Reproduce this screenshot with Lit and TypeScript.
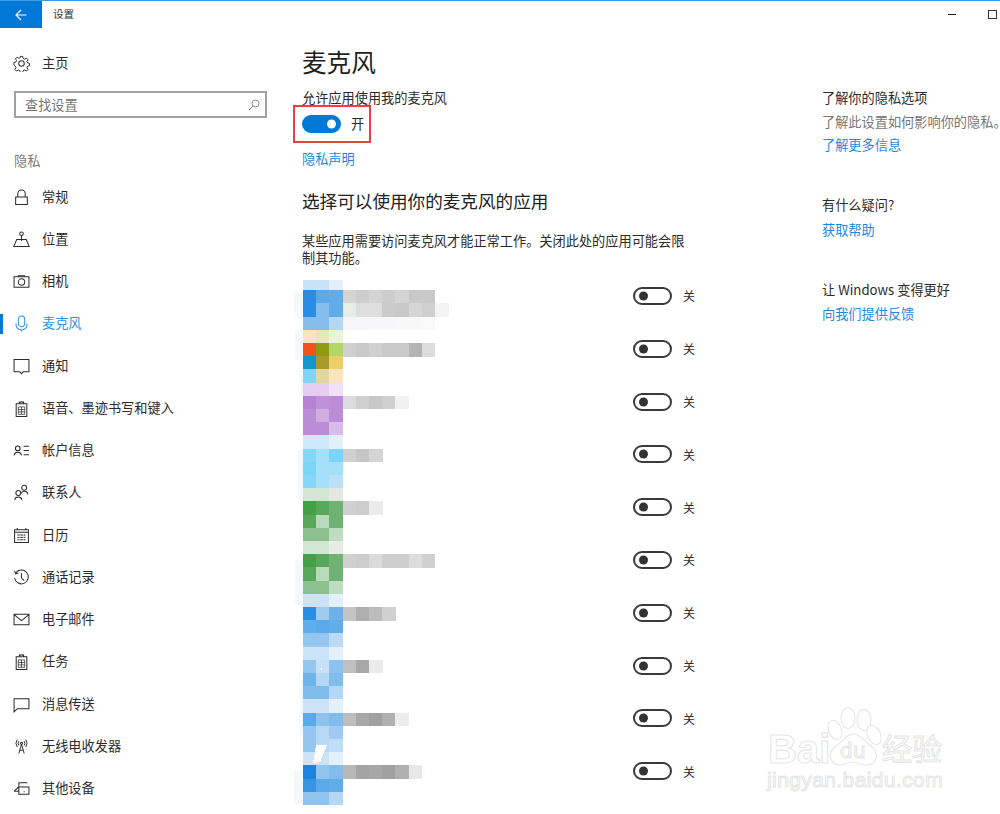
import { LitElement, html, css, svg } from "lit";
import { customElement } from "lit/decorators.js";

const MOSAIC: string[][] = [
  ["c9e2f7","c9e2f7","e3f0fb"],
  ["2a8de4","5aa9e8","60ade9","d4d4d4","cdcdcd","d4d4d4","cdcdcd","d4d4d4","c9c9c9","c9c9c9"],
  ["2a8de4","85bdee","60ade9","e6ece6","dedede","dedede","cbcbcb","c8c8c8","d6d6d6","cfcfcf","f3f3f3"],
  ["85bdee","85bdee","b5d7f4","f6f6f9","f6f6f9","f7f7f9","f7f7f9","f8f8f9","f8f8f9","f9f9fa"],
  ["fde3c4","e8e5c4","eaf2d8"],
  ["f4511e","8f9a10","b2d766","d0d0d0","cacaca","d0d0d0","cacaca","cacaca","b4b4b4","dcdcdc"],
  ["1196d0","a99a30","edcf6a"],
  ["80d4f8","dfd6a0","fde3c0"],
  ["e4cdee","e4cdee","efe2f6"],
  ["b583d2","bf92d8","bc8cd6","dcdcdc","cfcfcf","c8c8c8","cfcfcf","eef3ee"],
  ["bc8cd6","cfaee2","bc8cd6"],
  ["bc8cd6","bc8cd6","d9bde8"],
  ["cdeafd","cdeafd","e2f0fc"],
  ["85d6f8","a4e0fa","7bd5f8","d0d0d0","c6c6c6","d4d4d4"],
  ["7bd5f8","a4e0fa","a4e0fa"],
  ["85d6f8","a4e0fa","bcdff6"],
  ["d3e5d3","d3e5d3","e4e8e4"],
  ["43a047","58a85c","70b274","d0d0d0","cdcdcd","ebebeb"],
  ["58a85c","b8dab9","70b274"],
  ["8cc08e","8cc08e","bedcbf"],
  ["d3e5d3","d3e5d3","e8ece8"],
  ["43a047","58a85c","70b274","d0d0d0","cdcdcd","dadada","cecece","cecece","dcdcdc","d0d0d0"],
  ["58a85c","b8dab9","70b274"],
  ["8cc08e","8cc08e","bedcbf"],
  ["cde2f7","cde2f7","e4f0fb"],
  ["2a8de4","a0cbf0","6fb0e8","c4c4c4","aeaeae","bcbcbc","d0d0d0"],
  ["60ade9","5aa9e8","60ade9"],
  ["95c6f0","95c6f0","bcdaf5"],
  ["cde4f8","cde4f8","e4f0fc"],
  ["95c6f0","c8e0f8","8cc2ee","c0c0c0","a8a8a8","ebebeb"],
  ["6fb5ea","b5d7f4","80bcec"],
  ["80bcec","80bcec","b5d7f4"],
  ["cde4f8","cde4f8","e4f0fc"],
  ["5aa9e8","90c2ee","80bcec","bebebe","a8a8a8","a0a0a0","b0b0b0","ececec"],
  ["95c6f0","b8d9f5","9fcbf2"],
  ["95c6f0","b8d9f5","c0dff6"],
  ["cde4f8","cde4f8","e4f0fc"],
  ["1a84e0","90c4ee","80bcec","b8b8b8","a4a4a4","a8a8a8","a0a0a0","b0b0b0","e4ebe4"],
  ["3a94e4","5aa9e8","60ade9"],
  ["90c4ee","90c4ee","b5d7f4"],
];

const ic = (c: unknown) => html`<svg class="ic" viewBox="0 0 16 16" fill="none" stroke="currentColor" stroke-width=".95">${c}</svg>`;

const ICONS: Record<string, unknown> = {
  lock: svg`<path d="M2.500 7.500h11v7h-11zM4.500 7.500V4.500a3.500 3.500 0 0 1 7 0v3"/>`,
  loc: svg`<circle cx="8" cy="2.600" r="1.700"/><path d="M8 4.300V9.500M.8 14.500h14.400L12.500 8H3.500z"/>`,
  cam: svg`<path d="M1 3.500h14v10H1z"/><circle cx="8" cy="8.500" r="3"/><path d="M5 3.500V2.500h6v1"/>`,
  mic: svg`<rect x="5" y="1" width="6" height="10" rx="3"/><path d="M2.800 8v1a5 5 0 0 0 10.400 0V8M8 14v1.500"/>`,
  note: svg`<path d="M1 1.500h14v11.500H9.500L8 14.800 6.500 13H1z"/>`,
  clip: svg`<path d="M3 3.500h10v12H3zM6 3.500V2h1.200a1 1 0 0 1 1.600 0H10v1.500z"/><path d="M5 6.500h6v7H5zM5 9h6M5 11.200h6M8 6.500v7" stroke-width=".7"/>`,
  acct: svg`<circle cx="4.500" cy="6" r="2.200"/><path d="M1 12.500a3.600 3.600 0 0 1 7 0M10 4h5M10 8h5M10 12h5"/>`,
  people: svg`<circle cx="10.500" cy="3.500" r="2.300"/><path d="M7.500 9a3.400 3.400 0 0 1 6.500.8"/><circle cx="5" cy="8.500" r="2.300"/><path d="M1.500 15a3.600 3.600 0 0 1 7 0"/>`,
  cal: svg`<path d="M1.500 2.500h13v12h-13zM1.500 5h13M4 1v2M12 1v2"/><path d="M4 7.500h8M4 9.800h8M4 12h8M5.500 7v5.500M8 7v5.500M10.500 7v5.500" stroke-width=".8" stroke-dasharray="1.200 1"/>`,
  hist: svg`<path d="M2.300 4.200A6.500 6.500 0 1 1 1.500 8.500M8 4v4.500l2.500 2.500M1.500 1.800l1 2.800 2.600-.8"/>`,
  mail: svg`<path d="M1 3h14v10H1zM1 3.500l7 5.500 7-5.500"/>`,
  chat: svg`<path d="M1 2.500h14v9.500H4l-3 3z"/>`,
  radio: svg`<circle cx="8" cy="5" r="1"/><path d="M8 6 5.500 14.500M8 6l2.500 8.500M6.300 11.500h3.400M5.500 3a3.500 3.500 0 0 0 0 4M10.500 3a3.500 3.500 0 0 1 0 4M4 1.500a6 6 0 0 0 0 7M12 1.500a6 6 0 0 1 0 7" stroke-width=".9"/>`,
  dev: svg`<path d="M5.500 6.500v-4h8M1 10.500h4.500M1 10.500l4.500-4M5.500 6.500h9.500v7H5.500z"/><path d="M10 11h1"/>`,
  gear: svg`<circle cx="8" cy="8" r="2.600"/><path d="M6.800 1h2.400l.4 2 1.500.7 1.800-1.100 1.600 1.700-1.100 1.700.7 1.500 1.900.4v2.300l-1.900.4-.7 1.600 1.100 1.700-1.600 1.600-1.800-1.100-1.500.7-.4 2H6.800l-.4-2-1.500-.7-1.800 1.100-1.600-1.600 1.100-1.700-.7-1.600L.5 9.300V7l1.900-.4.7-1.500-1.100-1.700 1.600-1.700 1.800 1.100 1.500-.7z" transform="translate(.4 .4) scale(.95)"/>`,
};

const NAV: [string, string][] = [
  ["lock", "常规"], ["loc", "位置"], ["cam", "相机"], ["mic", "麦克风"], ["note", "通知"],
  ["clip", "语音、墨迹书写和键入"], ["acct", "帐户信息"], ["people", "联系人"], ["cal", "日历"],
  ["hist", "通话记录"], ["mail", "电子邮件"], ["clip", "任务"], ["chat", "消息传送"],
  ["radio", "无线电收发器"], ["dev", "其他设备"],
];

@customElement("app-root")
export class AppRoot extends LitElement {
  static styles = css`
    :host { display: block; width: 1000px; height: 814px; overflow: hidden; background: #fff; position: relative;
      font-family: "Noto Sans CJK SC", "Liberation Sans", sans-serif; font-size: 13.2px; color: #2b2b2b; }
    .accent { height: 1px; background: #3c9be0; }
    .bar { height: 27px; display: flex; align-items: center; }
    .back { width: 42px; height: 27px; background: #0078d7; display: flex; align-items: center; justify-content: center; color: #fff; }
    .back svg { width: 12px; height: 12px; }
    .app-title { margin: -2px 0 0 11px; font-size: 10.6px; color: #333; }
    .wc { margin-left: auto; margin-top: -1px; display: flex; align-items: center; }
    .min { width: 8px; height: 1px; background: #222; margin-right: 32px; }
    .max { width: 7px; height: 7px; border: 1px solid #333; margin-right: 3px; }
    .page { display: flex; }
    .side { width: 302px; flex: none; }
    .home { display: flex; align-items: center; height: 20px; margin-top: 25px; padding-left: 14px; }
    .home span, .item span { margin-top: -2px; }
    .ic { width: 17px; height: 17px; flex: none; margin: 0 12px 0 -1px; }
    .search { margin: 18px 0 0 14px; width: 253px; height: 27px; box-sizing: border-box; border: 2px solid #a0a0a0;
      display: flex; align-items: center; justify-content: space-between; padding: 0 5px 0 9px; color: #767676; }
    .search svg { width: 12px; height: 12px; color: #8a8a8a; }
    .group { margin: 33px 0 0 14px; line-height: 20px; color: #7a7a7a; }
    .nav { margin-top: 5px; }
    .item { height: 42.25px; display: flex; align-items: center; padding-left: 14px; position: relative; }
    .item.on { color: #2f92e6; }
    .item.on::before { content: ""; position: absolute; left: 0; top: 11px; width: 3px; height: 20px; background: #0078d7; }
    .main { width: 520px; flex: none; padding-top: 18px; position: relative; }
    h1 { margin: 0; font-weight: 400; font-size: 24.6px; line-height: 30px; color: #1f1f1f; }
    .sub { margin-top: 12px; line-height: 20px; }
    .tog-row { display: flex; align-items: center; margin-top: 6px; height: 19px; }
    .sw { box-sizing: border-box; width: 39px; height: 18px; border-radius: 9px; position: relative; flex: none; }
    .sw.on { background: #0078d7; }
    .sw.off { border: 2px solid #3a3a3a; }
    .sw::after { content: ""; position: absolute; width: 9px; height: 9px; border-radius: 50%; top: 50%; transform: translateY(-50%); }
    .sw.on::after { background: #fff; right: 5px; }
    .sw.off::after { background: #333; left: 4px; }
    .tog-row span { margin-left: 10px; }
    .redbox { position: absolute; left: -9px; top: 77px; width: 78px; height: 38px; box-sizing: border-box; border: 2.5px solid #ee3f3f; }
    a { color: #1e88e0; text-decoration: none; display: block; }
    .privacy { margin-top: 16px; line-height: 20px; }
    h2 { margin: 19px 0 0; font-weight: 400; font-size: 17.6px; line-height: 26px; color: #222; }
    .desc { margin: 18px 0 0; width: 393px; line-height: 17px; }
    .list { position: relative; width: 393px; margin-top: 3.6px; }
    .row { height: 52.8px; display: flex; align-items: center; justify-content: flex-end; }
    .row span { margin-left: 11px; width: 12px; font-size: 12px; }
    .mosaic { position: absolute; left: -8.7px; top: 7.2px; filter: blur(.4px); }
    .aside { padding-top: 60px; flex: 1; }
    .aside div, .aside a { line-height: 20px; white-space: nowrap; }
    .aside .gray { color: #767676; margin-top: 4px; }
    .aside a { margin-top: 3px; }
    .aside .q { margin-top: 40px; }
    .aside .q + a { margin-top: 5px; }
    .aside .q2 { margin-top: 40px; }
    .aside .q2 + a { margin-top: 4px; }
    .mark { position: absolute; left: 760px; top: 700px; }
    .mark text { font-family: "Liberation Sans", "Noto Sans CJK SC", sans-serif; fill: #fff; stroke: #e6e6e6; stroke-width: 1.1; }
  `;

  private mosaic() {
    const w = 13.2, h = 13.2;
    return html`<svg class="mosaic" width="170" height="545" viewBox="-10 0 170 545" shape-rendering="crispEdges">
      <path d="M-9 16h10v26h-6l-4-8zM-8 53h8v30h-8zM-2 98h3v20h-3zM-5 173h6v50h-6zM-8 283h9v45h-9zM-3 403h4v55h-4zM-9 493h10v35h-10z" fill="#f3f8fd"/>
      ${MOSAIC.map((r, y) => r.map((c, x) => svg`<rect x=${x * w} y=${y * h} width=${w + .3} height=${h + .3} fill="#${c}"/>`))}
      <rect x="-10" y="0" width="70" height="3" fill="#fff"/>
      <path d="M10 486l3-18h11l-7 17z" fill="#fff"/>
      <path d="M17 392l2-2v3z" fill="#fff"/>
    </svg>`;
  }

  render() {
    return html`
      <div class="accent"></div>
      <div class="bar">
        <div class="back"><svg viewBox="0 0 12 12" fill="none" stroke="currentColor" stroke-width="1.2"><path d="M1 6h10.500M6 1 1 6l5 5"/></svg></div>
        <div class="app-title">设置</div>
        <div class="wc"><div class="min"></div><div class="max"></div></div>
      </div>
      <div class="page">
        <nav class="side">
          <div class="home">${ic(ICONS.gear)}<span>主页</span></div>
          <div class="search">查找设置<svg viewBox="0 0 12 12" fill="none" stroke="currentColor"><circle cx="7.500" cy="4.500" r="3.500"/><path d="M5 7 1 11"/></svg></div>
          <div class="group">隐私</div>
          <div class="nav">
            ${NAV.map(([i, t]) => html`<div class="item ${t === "麦克风" ? "on" : ""}">${ic(ICONS[i])}<span>${t}</span></div>`)}
          </div>
        </nav>
        <main class="main">
          <h1>麦克风</h1>
          <div class="sub">允许应用使用我的麦克风</div>
          <div class="tog-row"><div class="sw on"></div><span>开</span></div>
          <div class="redbox"></div>
          <a class="privacy" href="#">隐私声明</a>
          <h2>选择可以使用你的麦克风的应用</h2>
          <p class="desc">某些应用需要访问麦克风才能正常工作。关闭此处的应用可能会限制其功能。</p>
          <div class="list">
            ${Array.from({ length: 10 }, () => html`<div class="row"><div class="sw off"></div><span>关</span></div>`)}
            ${this.mosaic()}
          </div>
        </main>
        <aside class="aside">
          <div>了解你的隐私选项</div>
          <div class="gray">了解此设置如何影响你的隐私。</div>
          <a href="#">了解更多信息</a>
          <div class="q">有什么疑问?</div>
          <a href="#">获取帮助</a>
          <div class="q2">让 Windows 变得更好</div>
          <a href="#">向我们提供反馈</a>
        </aside>
      </div>
      <svg class="mark" width="200" height="100" viewBox="0 0 200 100">
        <g fill="#fff" stroke="#e6e6e6" stroke-width="1.100">
          <ellipse cx="75" cy="30" rx="6.500" ry="10" transform="rotate(-20 75 30)"/>
          <ellipse cx="88" cy="18" rx="7" ry="10.500"/>
          <ellipse cx="104" cy="20" rx="7" ry="10.500"/>
          <ellipse cx="114" cy="35" rx="6.500" ry="10" transform="rotate(-25 114 35)"/>
          <path d="M94 34c6 0 9 6 17 12 9 7 6 19-5 19-7 0-8-3-13-3s-8 3-13 3c-10 0-13-12-5-18 8-5 11-13 19-13z"/>
        </g>
        <text x="8" y="63" font-size="40" font-weight="700">Bai</text>
        <text x="80" y="58" font-size="22" letter-spacing="1">du</text>
        <text x="122" y="60" font-size="30" style="font-family:'Noto Sans CJK SC',sans-serif">经验</text>
        <text x="7" y="87" font-size="21" letter-spacing=".4">jingyan.baidu.com</text>
      </svg>
    `;
  }
}
